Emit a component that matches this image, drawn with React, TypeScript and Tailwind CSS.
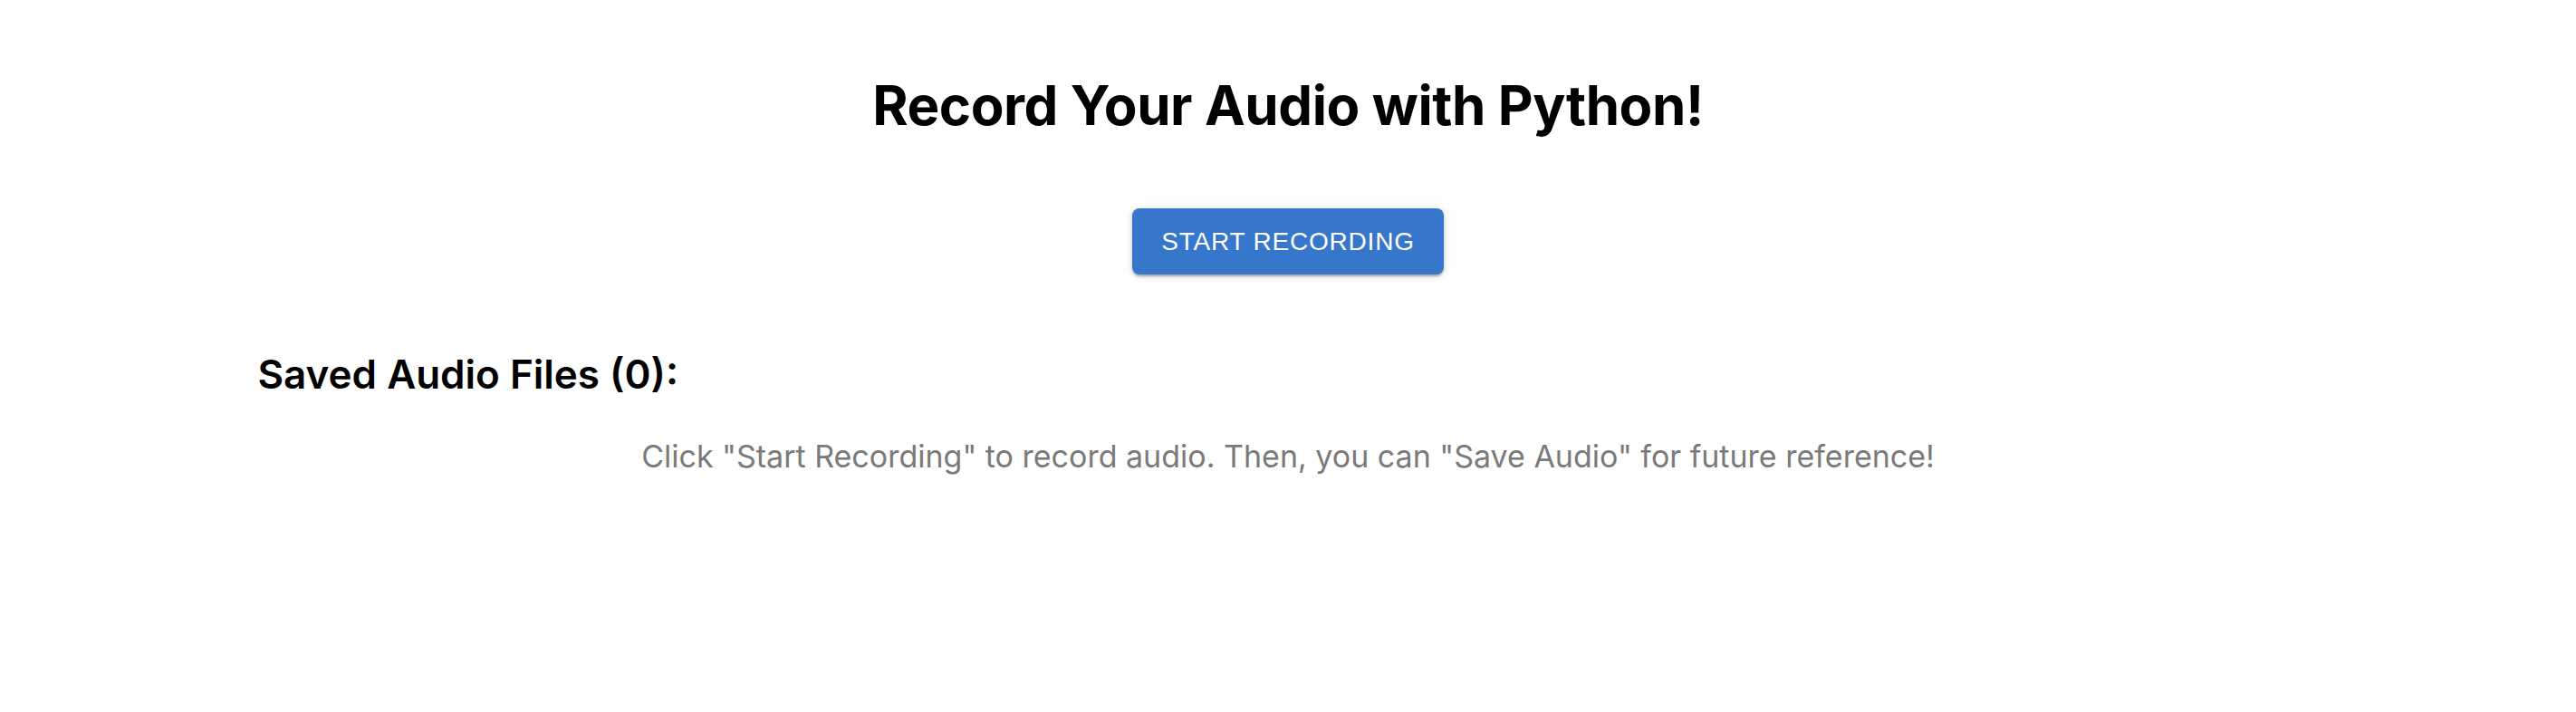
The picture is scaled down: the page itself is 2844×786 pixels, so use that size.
export default function App() {
  return (
    <div className="min-h-screen w-full bg-white flex flex-col items-center">
      <h1 className="mt-[86px] text-[60px] leading-none font-bold text-black tracking-[-0.4px] font-['Inter',sans-serif]">
        Record Your Audio with Python!
      </h1>
      <button
        type="button"
        className="mt-[84px] h-[73px] px-[32px] rounded-[8px] bg-[#3676cb] text-white text-[28px] tracking-[0.8px] uppercase shadow-[0_3px_2px_-1px_rgba(0,0,0,0.2),0_2px_4px_0_rgba(0,0,0,0.14),0_1px_10px_0_rgba(0,0,0,0.12)] font-['Liberation_Sans',Arial,sans-serif]"
      >
        Start Recording
      </button>
      <div className="w-[80%] mt-[88px]">
        <h3 className="text-[44px] leading-none font-semibold text-black font-['Inter',sans-serif]">
          Saved Audio Files (0):
        </h3>
        <p className="mt-[43px] text-center text-[34px] text-[#7a7a7a] font-['Inter',sans-serif]">
          Click "Start Recording" to record audio. Then, you can "Save Audio" for future reference!
        </p>
      </div>
    </div>
  )
}
